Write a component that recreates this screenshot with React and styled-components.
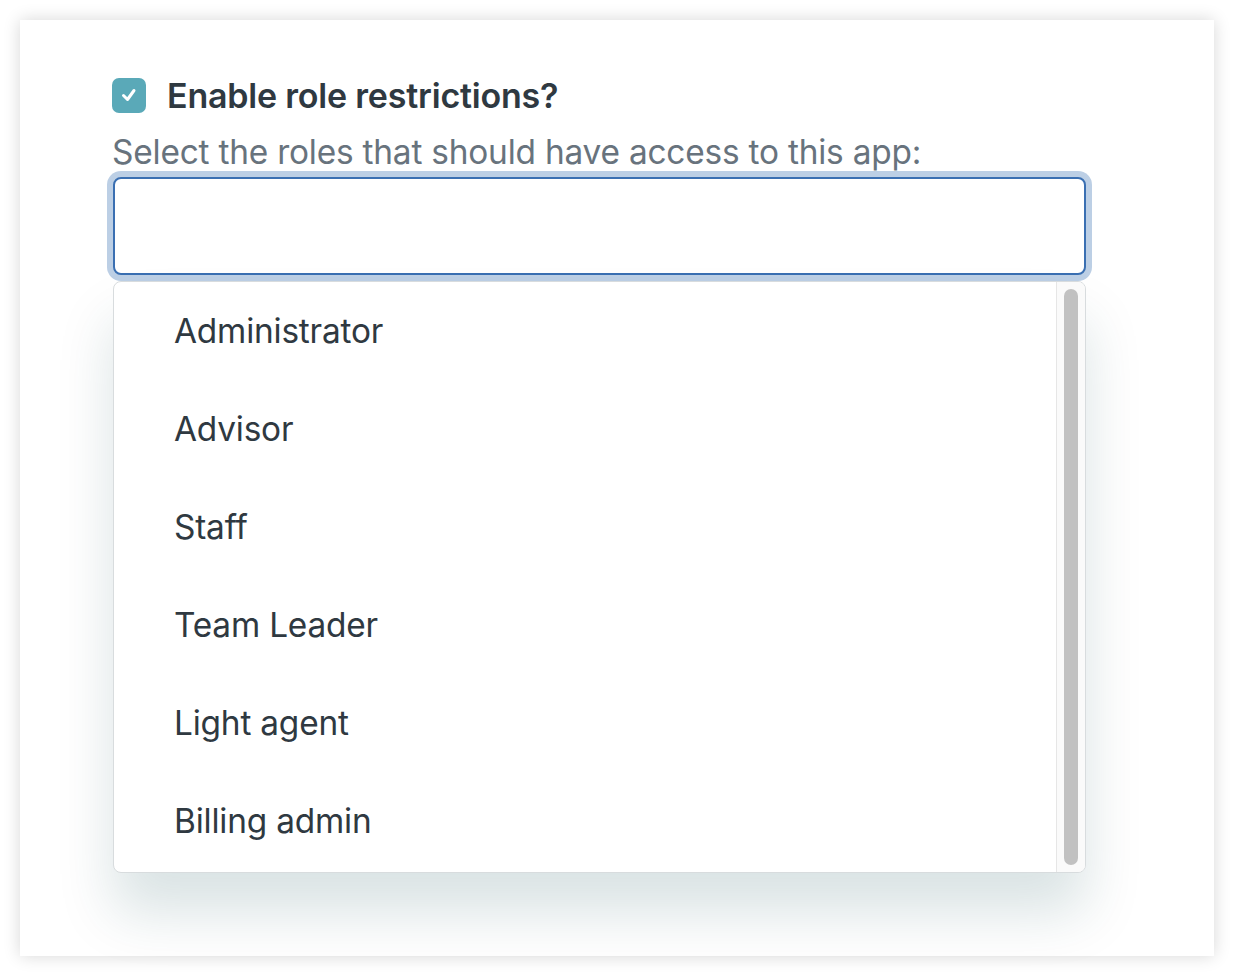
import React from "react";
import styled, { createGlobalStyle } from "styled-components";

const Global = createGlobalStyle`
  html, body { margin: 0; padding: 0; background: #ffffff; }
  body { font-family: Inter, "Noto Sans", sans-serif; -webkit-font-smoothing: antialiased; }
`;

const Page = styled.div`
  width: 1234px;
  height: 976px;
  padding: 20px;
  box-sizing: border-box;
`;

const Card = styled.div`
  width: 1194px;
  height: 936px;
  background: #fff;
  box-shadow: 0 0 16px rgba(0, 0, 0, 0.16);
  padding: 57px 0 0 92px;
  box-sizing: border-box;
`;

const Field = styled.div`
  width: 974px;
  display: flex;
  flex-direction: column;
`;

const CheckRow = styled.label`
  display: flex;
  align-items: center;
  gap: 21px;
  height: 36px;
`;

const Box = styled.span`
  width: 34px;
  height: 35px;
  border-radius: 7px;
  background: #5aa9b8;
  display: flex;
  align-items: center;
  justify-content: center;
`;

const Label = styled.span`
  font-size: 34px;
  font-weight: 600;
  color: #2f3941;
  letter-spacing: -0.2px;
`;

const Hint = styled.div`
  margin-top: 19px;
  font-size: 33.4px;
  line-height: 40px;
  color: #68737d;
  letter-spacing: -0.2px;
`;

const Input = styled.div`
  margin-top: 5px;
  margin-left: 1px;
  height: 98px;
  border: 2px solid #3a6fb2;
  border-radius: 8px;
  box-shadow: 0 0 0 6px #bccfe5;
  box-sizing: border-box;
  background: #fff;
`;

const Menu = styled.div`
  margin-top: 6px;
  margin-left: 1px;
  height: 592px;
  border: 1px solid #d8dcde;
  border-radius: 8px;
  background: #fff;
  box-shadow: 0 40px 56px rgba(4, 68, 77, 0.15);
  display: flex;
  overflow: hidden;
  box-sizing: border-box;
`;

const List = styled.ul`
  flex: 1;
  list-style: none;
  margin: 0;
  padding: 0;
`;

const Item = styled.li`
  height: 98px;
  display: flex;
  align-items: center;
  padding-left: 60px;
  font-size: 33.4px;
  color: #2f3941;
  letter-spacing: -0.2px;
`;

const Track = styled.div`
  width: 29px;
  border-left: 1px solid #e6e6e6;
  background: #fafafa;
  padding: 7px;
  box-sizing: border-box;
  display: flex;
`;

const Thumb = styled.div`
  width: 15px;
  flex: 1;
  background: #c1c1c1;
  border-radius: 8px;
`;

const roles = ["Administrator", "Advisor", "Staff", "Team Leader", "Light agent", "Billing admin"];

export default function App() {
  return (
    <Page>
      <Global />
      <Card>
        <Field>
          <CheckRow>
            <Box>
              <svg width="18" height="16" viewBox="0 0 18 16" fill="none">
                <path d="M3.5 8.5 L7.5 12.5 L14 3.5" stroke="#fff" strokeWidth="3" strokeLinecap="round" strokeLinejoin="round" />
              </svg>
            </Box>
            <Label>Enable role restrictions?</Label>
          </CheckRow>
          <Hint>Select the roles that should have access to this app:</Hint>
          <Input />
          <Menu>
            <List>
              {roles.map((r) => (
                <Item key={r}>{r}</Item>
              ))}
            </List>
            <Track>
              <Thumb />
            </Track>
          </Menu>
        </Field>
      </Card>
    </Page>
  );
}
